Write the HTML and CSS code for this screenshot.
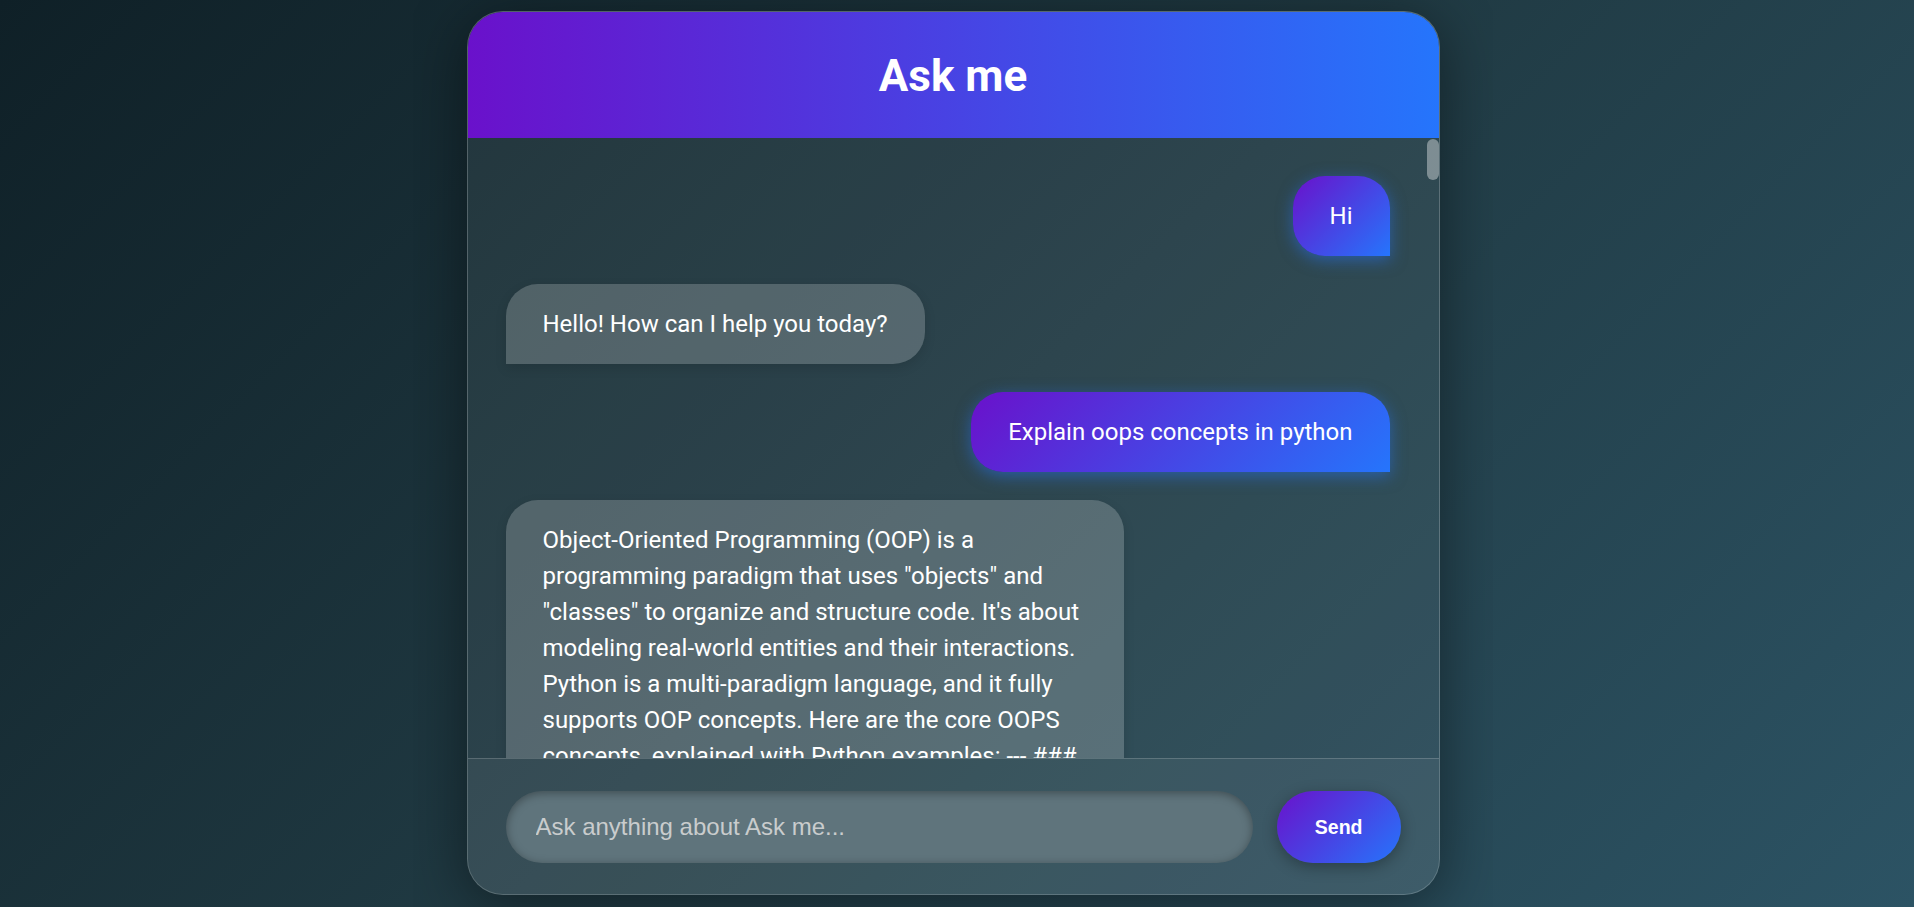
FILE: index.html
```html
<!DOCTYPE html>
<html lang="en">
<head>
<meta charset="utf-8">
<title>Ask me</title>
<link rel="stylesheet" href="styles.css">
</head>
<body>
<div class="wrap">
  <div class="card">
    <header class="head"><h1 class="title">Ask me</h1></header>
    <div class="thread">
      <div class="messages">
        <div class="msg user">Hi</div>
        <div class="msg bot">Hello! How can I help you today?</div>
        <div class="msg user">Explain oops concepts in python</div>
        <div class="msg bot">Object-Oriented Programming (OOP) is a programming paradigm that uses "objects" and "classes" to organize and structure code. It's about modeling real-world entities and their interactions. Python is a multi-paradigm language, and it fully supports OOP concepts. Here are the core OOPS concepts, explained with Python examples: --- ### 1. Classes and Objects **Class:** A class is a blueprint or a template for creating objects. It defines a set of attributes (data) and methods (functions) that the objects created from the class will have. Think of it like the architectural plan for a house. **Object:** An object is an instance of a class. When a class is defined, no memory is allocated until an object of that class is created. Each object has its own unique set of attribute values but shares the methods defined in the class. Think of it like an actual house built from the plan. ```python class Dog: # Class attribute (shared by all instances) species = "Canis familiaris" # The constructor method def __init__(self, name, age): # Instance attributes (unique to each instance) self.name = name self.age = age # An instance method def bark(self): return f"{self.name} says Woof!" def description(self): return f"{self.name} is {self.age} years old." # Creating objects (instances) of the Dog class my_dog = Dog("Buddy", 3) your_dog = Dog("Lucy", 5) print(my_dog.name) # Output: Buddy print(your_dog.description()) # Output: Lucy is 5 years old. print(my_dog.bark()) # Output: Buddy says Woof! print(my_dog.species) # Output: Canis familiaris ``` **Explanation:** * `class Dog:` defines a new class named `Dog`. * `species` is a class attribute shared by every dog. * `__init__` is a special method, the constructor, which is called automatically when you create a new object. `self` refers to the instance of the object being created. * `name` and `age` are instance attributes, unique to each dog. * `bark()` and `description()` are methods that describe the behaviors of a dog. --- ### 2. Encapsulation Encapsulation is the bundling of data (attributes) and the methods that operate on that data into a single unit, the class. It also involves restricting direct access to some of an object's components, which is known as data hiding. This prevents accidental modification of data and keeps the internal state of an object consistent. Python doesn't have strict access modifiers like `private` or `protected` in Java or C++. Instead, it relies on naming conventions: * **Public:** Attributes and methods are public by default (e.g., `self.name`). * **Protected:** A single underscore prefix (e.g., `self._balance`) signals that the member is intended for internal use within the class and its subclasses. * **Private:** A double underscore prefix (e.g., `self.__pin`) triggers name mangling, which makes it harder to access the attribute from outside the class. ```python class BankAccount: def __init__(self, owner, balance=0): self.owner = owner # Public attribute self.__balance = balance # Private attribute def deposit(self, amount): if amount &gt; 0: self.__balance += amount print(f"Deposited {amount}. New balance: {self.__balance}") else: print("Deposit amount must be positive.") def withdraw(self, amount): if 0 &lt; amount &lt;= self.__balance: self.__balance -= amount print(f"Withdrew {amount}. New balance: {self.__balance}") else: print("Insufficient funds or invalid amount.") def get_balance(self): return self.__balance account = BankAccount("Alice", 100) account.deposit(50) # Output: Deposited 50. New balance: 150 account.withdraw(30) # Output: Withdrew 30. New balance: 120 print(account.get_balance()) # Output: 120 # print(account.__balance) # AttributeError ``` --- ### 3. Inheritance Inheritance is a mechanism where a new class (the child or derived class) acquires the attributes and methods of an existing class (the parent or base class). It promotes code reusability and establishes an "is-a" relationship between classes. The child class can also add its own attributes and methods, or override the ones it inherited. ```python class Animal: def __init__(self, name): self.name = name def speak(self): return "Some generic sound" def eat(self): return f"{self.name} is eating." class Cat(Animal): def speak(self): return f"{self.name} says Meow!" class Cow(Animal): def __init__(self, name, milk_per_day): super().__init__(name) self.milk_per_day = milk_per_day def speak(self): return f"{self.name} says Moo!" kitty = Cat("Whiskers") bessie = Cow("Bessie", 20) print(kitty.speak()) # Output: Whiskers says Meow! print(kitty.eat()) # Output: Whiskers is eating. print(bessie.speak()) # Output: Bessie says Moo! print(bessie.milk_per_day) # Output: 20 ``` **Types of inheritance in Python:** * Single inheritance: a child class inherits from one parent class. * Multiple inheritance: a child class inherits from more than one parent class. * Multilevel inheritance: a class inherits from a child class, forming a chain. * Hierarchical inheritance: several child classes inherit from the same parent. * Hybrid inheritance: a combination of two or more of the types above. Python resolves the order in which methods are searched using the Method Resolution Order (MRO), which you can inspect with `ClassName.__mro__` or `ClassName.mro()`. --- ### 4. Polymorphism Polymorphism means "many forms". It allows objects of different classes to be treated as objects of a common type, and the same method name to behave differently depending on the object that calls it. Python achieves polymorphism mainly through method overriding and duck typing ("If it walks like a duck and quacks like a duck, it's a duck"). ```python class Bird: def fly(self): return "Most birds can fly." class Sparrow(Bird): def fly(self): return "Sparrows fly low and fast." class Penguin(Bird): def fly(self): return "Penguins cannot fly, but they swim well." def flying_test(bird): print(bird.fly()) for b in [Bird(), Sparrow(), Penguin()]: flying_test(b) # Output: # Most birds can fly. # Sparrows fly low and fast. # Penguins cannot fly, but they swim well. ``` Python also supports operator overloading through special "dunder" methods such as `__add__`, `__len__`, `__str__` and `__eq__`, so your own classes can work naturally with built-in operators and functions. ```python class Vector: def __init__(self, x, y): self.x = x self.y = y def __add__(self, other): return Vector(self.x + other.x, self.y + other.y) def __str__(self): return f"Vector({self.x}, {self.y})" print(Vector(1, 2) + Vector(3, 4)) # Output: Vector(4, 6) ``` --- ### 5. Abstraction Abstraction means hiding complex implementation details and showing only the essential features of an object. It lets you focus on what an object does instead of how it does it. In Python, abstraction is implemented with abstract base classes from the `abc` module. An abstract class cannot be instantiated, and any concrete subclass must implement all of its abstract methods. ```python from abc import ABC, abstractmethod class Shape(ABC): @abstractmethod def area(self): pass @abstractmethod def perimeter(self): pass class Rectangle(Shape): def __init__(self, width, height): self.width = width self.height = height def area(self): return self.width * self.height def perimeter(self): return 2 * (self.width + self.height) class Circle(Shape): def __init__(self, radius): self.radius = radius def area(self): return 3.14159 * self.radius ** 2 def perimeter(self): return 2 * 3.14159 * self.radius shapes = [Rectangle(4, 5), Circle(3)] for s in shapes: print(type(s).__name__, s.area(), s.perimeter()) # Output: # Rectangle 20 18 # Circle 28.27431 18.84954 # shape = Shape() # TypeError: Can't instantiate abstract class ``` --- ### Summary * **Class:** the blueprint that defines attributes and methods. * **Object:** a concrete instance of a class with its own data. * **Encapsulation:** bundling data and methods together and controlling access to them. * **Inheritance:** reusing and extending the code of an existing class. * **Polymorphism:** one interface, many implementations. * **Abstraction:** exposing only the essential behavior and hiding the details. Together these concepts help you write code that is modular, reusable, easier to test and easier to maintain. In Python they are flexible and rely heavily on conventions, so understanding the ideas behind them is more important than memorizing strict rules. Would you like me to go deeper into any of these concepts, such as multiple inheritance and the MRO, class methods and static methods, properties with the `@property` decorator, or design patterns built on top of OOP?</div>
      </div>
      <div class="thumb"></div>
    </div>
    <form class="composer">
      <input class="field" type="text" placeholder="Ask anything about Ask me...">
      <button class="send" type="button">Send</button>
    </form>
  </div>
</div>
</body>
</html>
```

FILE: styles.css
```css
* { box-sizing: border-box; }

html, body {
  margin: 0;
  height: 100%;
}

body {
  padding-right: 8px;
  background: linear-gradient(135deg, #0f2027 0%, #203a43 50%, #2c5364 100%);
  font-family: Roboto, "Noto Sans", sans-serif;
  color: #fff;
  overflow: hidden;
}

.wrap {
  width: 1080px;
  height: 100vh;
  margin: 0 auto;
  padding: 11px 0 12px;
  overflow: hidden;
  display: flex;
  justify-content: center;
}

.card {
  width: 973px;
  height: 100%;
  display: flex;
  flex-direction: column;
  border: 1px solid rgba(255, 255, 255, 0.22);
  border-radius: 36px;
  overflow: hidden;
  background: rgba(255, 255, 255, 0.06);
  box-shadow: 0 10px 60px rgba(0, 0, 0, 0.45);
}

.head {
  flex: none;
  height: 126px;
  display: flex;
  align-items: center;
  justify-content: center;
  background: linear-gradient(to right, #6a11cb, #2575fc);
}

.title {
  margin: 0;
  font-size: 44px;
  font-weight: 700;
  line-height: 1;
  padding-top: 2px;
}

.thread {
  flex: 1;
  min-height: 0;
  position: relative;
  display: flex;
}

.messages {
  flex: 1;
  min-height: 0;
  overflow-y: auto;
  scrollbar-width: none;
  padding: 38px 49px 38px 38px;
  display: flex;
  flex-direction: column;
  gap: 28px;
}

.messages::-webkit-scrollbar { display: none; }

.thumb {
  position: absolute;
  top: 1px;
  right: 0;
  width: 12px;
  height: 41px;
  border-radius: 6px;
  background: rgba(255, 255, 255, 0.38);
}

.msg {
  flex: none;
  max-width: 70%;
  padding: 22px 37px;
  font-size: 24px;
  line-height: 36px;
  border-radius: 32px;
  word-wrap: break-word;
}

.user {
  align-self: flex-end;
  border-bottom-right-radius: 0;
  background: linear-gradient(135deg, #6a11cb, #2575fc);
  box-shadow: 0 4px 16px rgba(37, 117, 252, 0.5);
}

.bot {
  align-self: flex-start;
  border-bottom-left-radius: 0;
  background: rgba(255, 255, 255, 0.2);
  box-shadow: 0 4px 12px rgba(0, 0, 0, 0.12);
}

.composer {
  flex: none;
  margin: 0;
  display: flex;
  gap: 24px;
  padding: 32px 38px 31px;
  border-top: 1px solid rgba(255, 255, 255, 0.18);
  background: rgba(255, 255, 255, 0.05);
}

.field {
  flex: 1;
  height: 72px;
  padding: 0 30px;
  border: none;
  outline: none;
  border-radius: 36px;
  background: #5f747c;
  box-shadow: inset 0 2px 10px rgba(0, 0, 0, 0.35);
  font-family: "Liberation Sans", Arial, sans-serif;
  font-size: 24px;
  color: #fff;
}

.field::placeholder { color: #c9cccd; }

.send {
  flex: none;
  height: 72px;
  padding: 0 38px;
  border: none;
  border-radius: 36px;
  background: linear-gradient(135deg, #6a11cb, #2575fc);
  box-shadow: 0 4px 15px rgba(0, 0, 0, 0.3);
  font-family: "Liberation Sans", Arial, sans-serif;
  font-size: 19.5px;
  font-weight: 700;
  color: #fff;
  cursor: pointer;
}
```
